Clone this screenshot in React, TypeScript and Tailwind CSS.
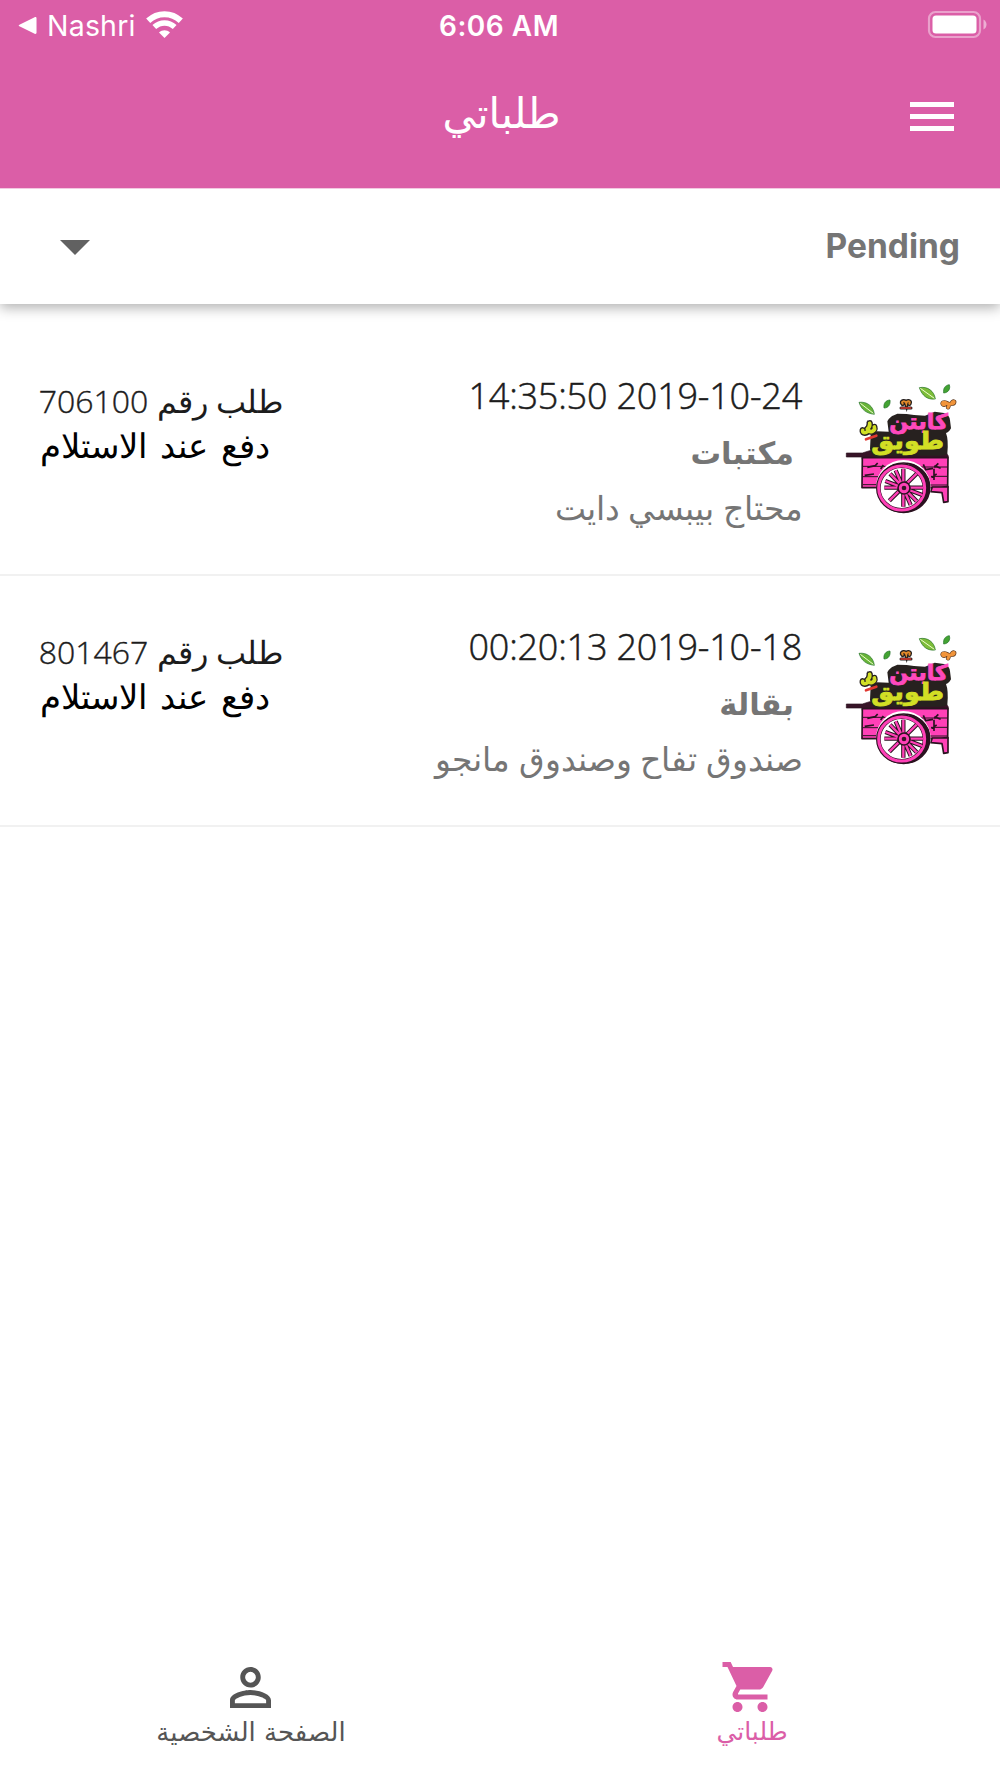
import React from 'react';

type Order = { id: number; number: string; payment: string; date: string; category: string; details: string };

const orders: Order[] = [
  { id: 1, number: '706100', payment: 'دفع عند الاستلام', date: '14:35:50 2019-10-24', category: 'مكتبات', details: 'محتاج بيبسي دايت' },
  { id: 2, number: '801467', payment: 'دفع عند الاستلام', date: '00:20:13 2019-10-18', category: 'بقالة', details: 'صندوق تفاح وصندوق مانجو' },
];

function StatusBar() {
  return (
    <div className="grid h-[51px] grid-cols-3 items-center px-[18px] font-['Inter',sans-serif] text-white">
      <div className="flex items-center">
        <svg className="h-[19px] w-[19px]" viewBox="0 0 19 20" fill="currentColor"><path d="M1 9.200 17 1.300c1-.500 2 0 2 1v15.400c0 1-1 1.500-2 1L1 10.900c-1-.500-1-1.200 0-1.700Z" /></svg>
        <span className="ml-[10px] text-[28.500px] leading-[50px] tracking-[0.2px]">Nashri</span>
        <svg className="ml-[10px] h-[27px] w-[37px] -translate-y-px" viewBox="0 0 37 27" fill="none" stroke="currentColor">
          <path d="M2.200 9.800C11.500 1 25.500 1 34.800 9.800" strokeWidth="6" />
          <path d="M8.300 16C14.300 10.500 22.700 10.500 28.700 16" strokeWidth="5.500" />
          <path d="M13 21.500c3.200-3 7.800-3 11 0L18.500 27Z" fill="currentColor" stroke="none" />
        </svg>
      </div>
      <span className="-ml-[2px] text-center text-[28px] font-semibold leading-[50px] tracking-[0.5px]">6:06 AM</span>
      <svg className="mr-[-5px] h-[29px] w-[60px] -translate-y-px justify-self-end" viewBox="0 0 60 29">
        <rect x="2" y="2" width="51" height="25" rx="6.500" fill="none" stroke="#fff" strokeOpacity=".42" strokeWidth="2.200" />
        <rect x="5.500" y="5.500" width="44" height="18" rx="3.500" fill="#fff" />
        <path d="M56.500 9.500c4 2 4 8 0 10Z" fill="#fff" fillOpacity=".5" />
      </svg>
    </div>
  );
}

function CartLogo() {
  return (
    <svg className="h-[160px] w-[140px] shrink-0" viewBox="0 0 420 480">
      {/* leaves */}
      <g fill="#43a332" stroke="#216f29" strokeWidth="2">
        <path d="M268 53c24-5 45 10 48 34-24 3-40-10-48-34Z" fill="#7dbd38" />
        <path d="M87 97c25-3 43 12 46 36-24-3-39-14-46-36Z" fill="#68b438" />
        <path d="M358 44c4 13-3 24-17 25-2-14 4-23 17-25Z" />
        <path d="M180 90c2 14-5 24-18 24-2-13 4-23 18-24Z" />
      </g>
      <path d="m271 55 42 30M91 100l39 30" stroke="#f1ffd0" strokeWidth="3" />
      {/* flowers */}
      <g strokeLinecap="round" fill="none">
        <path d="M218 101c-7-8 8-10 11-1 2-9 14-8 9 1" stroke="#27211f" strokeWidth="14" />
        <path d="M218 101c-7-8 8-10 11-1 2-9 14-8 9 1" stroke="#e48a29" strokeWidth="6" />
        <path d="M213 114h30" stroke="#27211f" strokeWidth="9" />
        <path d="M213 114h29" stroke="#e03831" strokeWidth="5" />
        <path d="M348 101c-9 9-15-4-6-4 8-1 13 9 22 4 11 0 11-10 3-5M358 103l-4 9" stroke="#5d3a20" strokeWidth="13" />
        <path d="M348 101c-9 9-15-4-6-4 8-1 13 9 22 4 11 0 11-10 3-5M358 103l-4 9" stroke="#f1943a" strokeWidth="9" />
      </g>
      {/* cart */}
      <g stroke="#2b1220" strokeLinejoin="round">
        <path d="M49 249h48l22-7h226l10 16-2 10H96v-7H49Z" fill="#371427" strokeWidth="2" />
        <path d="m97 263 257-1-1 90-257 1Z" fill="#ff40b7" strokeWidth="5" />
        <path d="m333 351 21-1v45l-13 2-5-29-34-3 5-14Z" fill="#ff40b7" strokeWidth="5" />
        <path d="M98 289h69M270 291h83M98 320h48M303 319h50M99 344h45M299 345h53" fill="none" strokeWidth="3" />
        <path d="m112 292 24-5 7-8m9 18 8-12m120-2 7 16 22-4m4-8 19 8m-19-3 12-12M104 316l28-4m180-16v34m-8-8 16-10" fill="none" strokeWidth="5" />
      </g>
      {/* wheel */}
      <circle cx="220" cy="352" r="82" fill="#fff" />
      <ellipse cx="221" cy="353" rx="78" ry="74" fill="none" stroke="#2b1220" strokeWidth="5" />
      <path d="M232 278c88 14 95 131-2 150 50-28 53-108 2-150Z" fill="#2b1220" />
      <ellipse cx="215" cy="354" rx="70" ry="67" fill="#fff" stroke="#2b1220" strokeWidth="14" />
      <ellipse cx="215" cy="354" rx="69" ry="66" fill="none" stroke="#ff40b7" strokeWidth="9" />
      <g stroke="#2b1220" strokeWidth="13"><path d="M220 296v114M163 353h116M180 311l80 83M260 311l-82 81M197 301l45 104M166 333l111 42" /></g>
      <g stroke="#ff40b7" strokeWidth="7"><path d="M220 296v114M163 353h116M180 311l80 83M260 311l-82 81M197 301l45 104M166 333l111 42" /></g>
      <circle cx="222" cy="354" r="18" fill="#ff40b7" stroke="#2b1220" strokeWidth="5" />
      <circle cx="222" cy="354" r="7" fill="#371427" />
      {/* lettering plate */}
      <path d="M172 154q8-14 20-18l10-5 28 1 22 3 33 2 29-12 28 4q16 4 18 22l3 24q-7 13-15 14 8 20 4 62-9 6-22 6H174q-12 7-35 5-16-5-19-25l2-43 18-10 36 1Z" fill="#27211f" />
      <g strokeLinecap="round" fill="none">
        <path d="M98 181c-2 10 14 10 17-2 5 11 22 4 18-8m-14-11c2 8-2 13-7 17" stroke="#27211f" strokeWidth="19" />
        <path d="M98 181c-2 10 14 10 17-2 5 11 22 4 18-8m-14-11c2 8-2 13-7 17" stroke="#d2df25" strokeWidth="11" />
        <path d="m108 208 31-11" stroke="#e03831" strokeWidth="8" />
      </g>
      <g fontFamily="'DejaVu Sans', sans-serif" fontWeight="700" textAnchor="middle" direction="rtl">
        <text x="266" y="176" fontSize="64" textLength="176" lengthAdjust="spacingAndGlyphs" fill="#ff49bd" stroke="#ff49bd" strokeWidth="2.500">كابتن</text>
        <text x="233" y="237" fontSize="72" textLength="218" lengthAdjust="spacingAndGlyphs" fill="#d2df25" stroke="#d2df25" strokeWidth="2.500">طويق</text>
      </g>
    </svg>
  );
}

function OrderRow({ order }: { order: Order }) {
  return (
    <div className="flex h-[251px] items-start border-b-2 border-[#f1f1f1] pl-[40px] pr-[30px]">
      <div dir="rtl" className="mt-[54px] w-[243px] font-['Open_Sans','DejaVu_Sans',sans-serif] font-light leading-[44px]">
        <p className="h-[44px] whitespace-nowrap text-[32px] text-[#1c1c1c]">طلب رقم <span className="[-webkit-text-stroke:0.4px]">{order.number}</span></p>
        <p className="h-[44px] whitespace-nowrap text-left text-[34px] text-black [word-spacing:4px]">{order.payment}</p>
      </div>
      <div className="mr-[27px] mt-[43px] flex flex-1 flex-col items-end whitespace-nowrap font-['Open_Sans','DejaVu_Sans',sans-serif]">
        <p className="mr-px text-[36px] font-light leading-[56px] tracking-[-0.2px] text-[#1c1c1c] [-webkit-text-stroke:0.5px]">{order.date}</p>
        <p dir="rtl" className="mr-[9px] text-[30.500px] font-bold leading-[56px] text-[#757575]">{order.category}</p>
        <p dir="rtl" className="text-[33px] font-light leading-[56px] text-[#757575]">{order.details}</p>
      </div>
      <div className="mt-[45px]"><CartLogo /></div>
    </div>
  );
}

export default function App() {
  return (
    <div className="flex h-[1778px] w-[1000px] flex-col overflow-hidden bg-white">
      <header className="relative z-10 box-content h-[188px] shrink-0 border-b border-[#f3c9e1] bg-[#db5ea7]">
        <StatusBar />
        <div className="grid h-[137px] grid-cols-3 items-start">
          <h1 className="col-start-2 ml-[3px] mt-[36px] text-center font-['DejaVu_Sans',sans-serif] text-[41.500px] leading-[54px] text-white">طلباتي</h1>
          <button className="mr-[46px] mt-[51px] flex w-[44px] flex-col gap-[7px] justify-self-end" aria-label="menu">
            <span className="h-[5px] w-full bg-white" />
            <span className="h-[5px] w-full bg-white" />
            <span className="h-[5px] w-full bg-white" />
          </button>
        </div>
      </header>
      <div className="flex h-[115px] shrink-0 items-center justify-between bg-white pl-[60px] pr-[40px] shadow-[0_4px_12px_rgba(0,0,0,0.3)]">
        <svg className="h-[15px] w-[30px] translate-y-px" viewBox="0 0 30 15" fill="#616161"><path d="M0 0h30L15 15Z" /></svg>
        <span className="font-['Inter',sans-serif] text-[33.500px] font-bold text-[#757575]">Pending</span>
      </div>
      <main className="flex-1 pt-[21px]">
        {orders.map(o => <OrderRow key={o.id} order={o} />)}
      </main>
      <nav className="grid h-[128px] grid-cols-2 font-['DejaVu_Sans',sans-serif] leading-[30px]">
        <button className="flex flex-col items-center text-[#555]">
          <svg className="mt-[17px] h-[41px] w-[41px]" viewBox="4 4 16 16" fill="currentColor">
            <path d="M12 5.900a2.100 2.100 0 1 1 0 4.200 2.100 2.100 0 0 1 0-4.200m0 9c2.970 0 6.100 1.460 6.100 2.100v1.100H5.900V17c0-.640 3.130-2.100 6.100-2.100M12 4C9.790 4 8 5.790 8 8s1.790 4 4 4 4-1.790 4-4-1.790-4-4-4m0 9c-2.670 0-8 1.340-8 4v3h16v-3c0-2.660-5.330-4-8-4" />
          </svg>
          <span className="ml-[2px] mt-[9px] text-[26px]">الصفحة الشخصية</span>
        </button>
        <button className="flex flex-col items-center text-[#db5ea7]">
          <svg className="mt-[7px] h-[60px] w-[60px]" viewBox="0 0 24 24" fill="currentColor">
            <path d="M7 18c-1.100 0-1.990.900-1.990 2S5.900 22 7 22s2-.900 2-2-.900-2-2-2M1 2v2h2l3.600 7.590-1.350 2.450c-.160.280-.250.610-.250.960 0 1.100.900 2 2 2h12v-2H7.420c-.140 0-.250-.110-.250-.250l.030-.120.900-1.630h7.450c.750 0 1.410-.410 1.750-1.030l3.580-6.490A1.003 1.003 0 0 0 20 4H5.210l-.940-2zm16 16c-1.100 0-1.990.900-1.990 2s.890 2 1.990 2 2-.900 2-2-.900-2-2-2" />
          </svg>
          <span className="ml-[4px] text-[25px]">طلباتي</span>
        </button>
      </nav>
    </div>
  );
}
